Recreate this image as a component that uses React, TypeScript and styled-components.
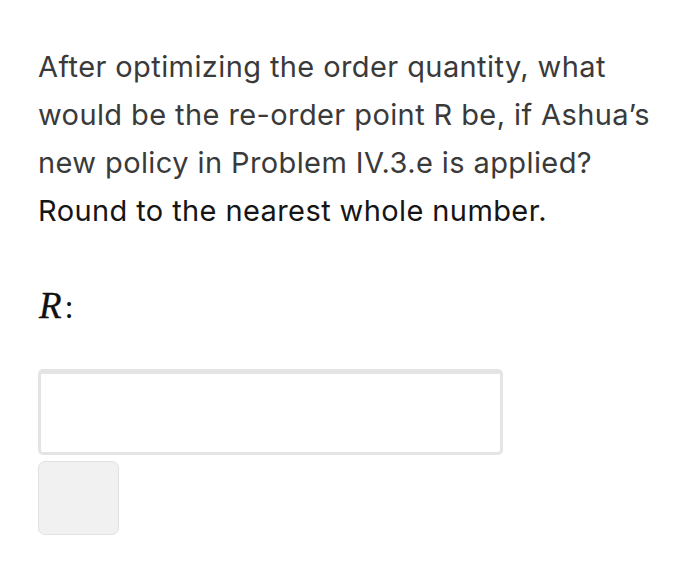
import React from "react";
import styled, { createGlobalStyle } from "styled-components";

const Global = createGlobalStyle`
  html, body { margin: 0; padding: 0; background: #ffffff; }
`;

const Page = styled.div`
  padding: 43px 0 0 38px;
  width: 700px;
  box-sizing: border-box;
  font-family: Inter, "Open Sans", "Liberation Sans", sans-serif;
`;

const Question = styled.p`
  margin: 0;
  font-size: 29px;
  line-height: 48px;
  color: #3a3a3a;
  letter-spacing: 0.4px;
  white-space: nowrap;
`;

const Line = styled.span<{ $strong?: boolean }>`
  display: block;
  color: ${(p) => (p.$strong ? "#151515" : "#3a3a3a")};
`;

const Label = styled.div`
  margin-top: 50px;
  font-family: "Liberation Serif", "Times New Roman", serif;
  font-style: italic;
  font-size: 37px;
  line-height: 42px;
  color: #111111;
  padding-left: 1px;
  -webkit-text-stroke: 0.3px #111111;
`;

const Colon = styled.span`
  font-style: normal;
  font-size: 33px;
  margin-left: 3px;
  -webkit-text-stroke: 0;
`;

const AnswerBox = styled.div`
  margin-top: 41px;
  width: 465px;
  height: 86px;
  box-sizing: border-box;
  border: 3px solid #e4e4e4;
  border-top-width: 5px;
  border-radius: 5px;
  background: #fff;
`;

const Button = styled.div`
  margin-top: 6px;
  width: 81px;
  height: 74px;
  box-sizing: border-box;
  background: #f1f1f1;
  border: 1.5px solid #e2e2e2;
  border-radius: 7px;
`;

export default function App() {
  return (
    <>
      <Global />
      <Page>
        <Question>
          <Line>After optimizing the order quantity, what</Line>
          <Line>would be the re-order point R be, if Ashua’s</Line>
          <Line>new policy in Problem IV.3.e is applied?</Line>
          <Line $strong>Round to the nearest whole number.</Line>
        </Question>
        <Label>
          R<Colon>:</Colon>
        </Label>
        <AnswerBox />
        <Button />
      </Page>
    </>
  );
}
